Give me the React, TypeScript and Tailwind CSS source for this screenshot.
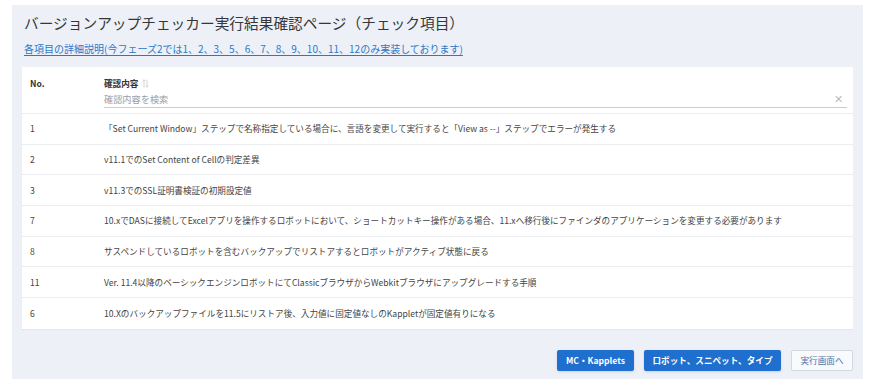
import React from 'react';

const rows: { no: string; text: string }[] = [
    { no: '1', text: '「Set Current Window」ステップで名称指定している場合に、言語を変更して実行すると「View as --」ステップでエラーが発生する' },
    { no: '2', text: 'v11.1でのSet Content of Cellの判定差異' },
    { no: '3', text: 'v11.3でのSSL証明書検証の初期設定値' },
    { no: '7', text: '10.xでDASに接続してExcelアプリを操作するロボットにおいて、ショートカットキー操作がある場合、11.xへ移行後にファインダのアプリケーションを変更する必要があります' },
    { no: '8', text: 'サスペンドしているロボットを含むバックアップでリストアするとロボットがアクティブ状態に戻る' },
    { no: '11', text: 'Ver. 11.4以降のベーシックエンジンロボットにてClassicブラウザからWebkitブラウザにアップグレードする手順' },
    { no: '6', text: '10.Xのバックアップファイルを11.5にリストア後、入力値に固定値なしのKappletが固定値有りになる' },
];

const SortIcon = () => (
    <svg width="7" height="9" viewBox="0 0 7 9" fill="none" stroke="#c4c8d0" strokeWidth="0.8">
        <path d="M2 8.5V0.8M0.6 2.2L2 0.8L3.4 2.2" />
        <path d="M5 0.5V8.2M3.6 6.8L5 8.2L6.4 6.8" />
    </svg>
);

const App: React.FC = () => {
    return (
        <div className="w-[871px] h-[391px] bg-white pt-[5px] pl-[12px] font-['Noto_Sans_CJK_JP','Noto_Sans',sans-serif]">
            <div className="w-[851px] h-[374px] bg-[#edf0f7] px-[10px] pt-[8px]">
                <h1 className="pl-[2px] text-[14.7px] leading-[20px] text-[#363636] font-normal">
                    バージョンアップチェッカー実行結果確認ページ（チェック項目）
                </h1>
                <a href="#" className="block mt-[9px] pl-[2px] text-[10px] leading-[14px] text-[#2a78c8] underline underline-offset-2">
                    各項目の詳細説明(今フェーズ2では1、2、3、5、6、7、8、9、10、11、12のみ実装しております)
                </a>

                <div className="mt-[11px] bg-white text-[8.6px] shadow-[0_1px_1px_rgba(0,0,0,0.04)]">
                    <div className="flex pt-[10px] pb-[5px] border-b border-[#ebedf0]">
                        <div className="w-[82px] pl-[8px] font-bold text-[#333] leading-[12px]">No.</div>
                        <div className="flex-1 pr-[6px]">
                            <div className="flex items-center gap-[4px] font-bold text-[#333] leading-[12px]">
                                確認内容
                                <SortIcon />
                            </div>
                            <div className="mt-[3px] flex items-center justify-between h-[16px] border-b border-[#c9ccd2]">
                                <span className="text-[9.2px] text-[#9a9da3]">確認内容を検索</span>
                                <span className="text-[11px] leading-none text-[#b9bcc2] pr-[4px] -mt-[2px]">✕</span>
                            </div>
                        </div>
                    </div>
                    {rows.map((r, i) => (
                        <div
                            key={r.no}
                            className={`flex items-center h-[30.7px] text-[#444] ${i < rows.length - 1 ? 'border-b border-[#ebedf0]' : ''}`}
                        >
                            <div className="w-[82px] pl-[8px]">{r.no}</div>
                            <div className="flex-1 whitespace-nowrap">{r.text}</div>
                        </div>
                    ))}
                </div>

                <div className="mt-[21px] flex justify-end gap-[10px] text-[8.6px]">
                    <button className="h-[21px] w-[77px] rounded-[2px] bg-[#1f6fcf] text-white font-bold shadow-sm">
                        MC・Kapplets
                    </button>
                    <button className="h-[21px] w-[137px] rounded-[2px] bg-[#1f6fcf] text-white font-bold shadow-sm">
                        ロボット、スニペット、タイプ
                    </button>
                    <button className="h-[21px] w-[62px] rounded-[2px] bg-[#f9fafd] border border-[#d3d9e3] text-[#4f72a6]">
                        実行画面へ
                    </button>
                </div>
            </div>
        </div>
    );
};

export default App;
